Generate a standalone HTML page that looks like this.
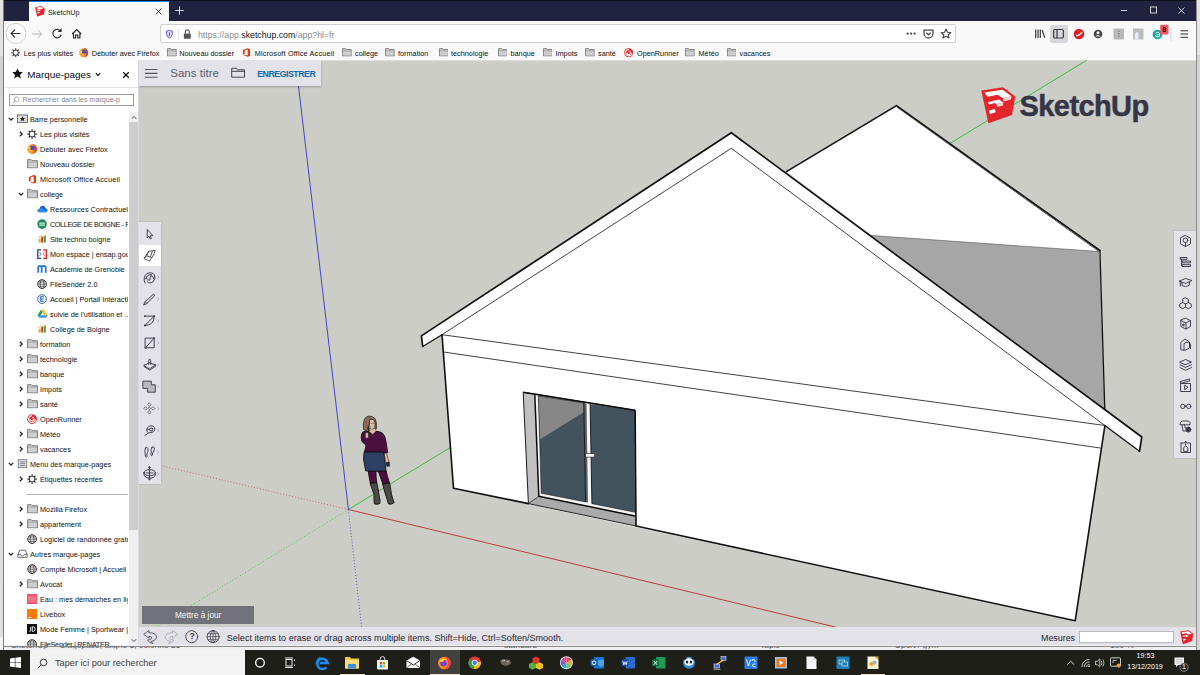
<!DOCTYPE html>
<html lang="fr">
<head>
<meta charset="utf-8">
<title>SketchUp</title>
<style>
*{box-sizing:border-box;margin:0;padding:0}
html,body{width:1200px;height:675px;overflow:hidden;background:#cccdc7;font-family:"Liberation Sans",sans-serif;}
body{position:relative}
.abs{position:absolute}
.t{position:absolute;white-space:nowrap;line-height:1;color:#111}
#titlebar{left:4px;top:0;width:1192px;height:21px;background:#202240;border-top:1px solid #0f101f}
#tab{left:28.700px;top:0.800px;width:140.200px;height:20.200px;background:#f9f9fa;border-top:1.300px solid #0a84ff}
#navbar{left:4px;top:21px;width:1192px;height:25px;background:#f9f9fa}
#bmbar{left:4px;top:46px;width:1192px;height:14px;background:#f9f9fa}
#urlbar{left:160px;top:24px;width:796px;height:19px;background:#fff;border:1px solid #cfcfd3;border-radius:2px}
#sidebar{left:4px;top:60px;width:134px;height:585px;background:#fff;overflow:hidden}
#splitter{left:138px;top:60px;width:1px;height:585px;background:#d9d9dc}
#scene{left:0;top:0;width:1200px;height:675px}
#suhead{left:139px;top:60px;width:182px;height:26px;background:#e3e2e9;box-shadow:0 1px 2px rgba(0,0,0,.25)}
#ltool{left:139px;top:222px;width:22px;height:262px;background:#e3e2e9;box-shadow:0 0 2px rgba(0,0,0,.2)}
#rtool{left:1174px;top:231px;width:22px;height:227px;background:#e3e2e9;box-shadow:0 0 2px rgba(0,0,0,.2)}
#status{left:139px;top:627.200px;width:1057px;height:18.300px;background:#e3e2e9}
#under{left:0;top:645px;width:1200px;height:5px;background:#f0f0f0}
#taskbar{left:0;top:650px;width:1200px;height:25px;background:#1f1f19}
#tsearch{left:30px;top:650px;width:215px;height:25px;background:#f3f3f3}
#leftstrip{left:0;top:0;width:4px;height:650px;background:linear-gradient(#e2e2e2 0,#e2e2e2 56px,#d0d0d0 56px,#d8d8d8 300px,#e0e0e0 637px,#f4f4f4 637px);border-right:1px solid #7c7c7c}
#rightstrip{left:1196px;top:0;width:4px;height:650px;background:linear-gradient(#e6e6e6 0,#e6e6e6 55px,#d4d4d2 55px);border-left:1px solid #8a8a8a}
</style>
</head>
<body>
<svg id="scene" class="abs" viewBox="0 0 1200 675">
<!--SCENE-->
<rect x="0" y="0" width="1200" height="675" fill="#cccdc7"/>
<rect x="139" y="60" width="1057" height="1.2" fill="#dddddb"/>
<!-- axes behind -->
<g fill="none" stroke-width="1">
<line x1="348.4" y1="509.5" x2="1087.1" y2="60" stroke="#38c038"/>
<line x1="348.4" y1="509.5" x2="845" y2="629.4" stroke="#c03c3c"/>
<line x1="348.4" y1="509.5" x2="295.4" y2="60" stroke="#4444cc"/>
<line x1="348.4" y1="509.5" x2="139" y2="460.5" stroke="#cc4a4a" stroke-opacity="0.8" stroke-dasharray="1 2"/>
<line x1="348.4" y1="509.5" x2="139" y2="637.5" stroke="#3fbf3f" stroke-opacity="0.85" stroke-dasharray="1 2"/>
<line x1="348.4" y1="509.5" x2="361.6" y2="627.5" stroke="#4848d0" stroke-opacity="0.85" stroke-dasharray="1 2"/>
</g>
<!-- back building -->
<polygon points="786.4,171.6 896.5,105.6 1099.9,250.5 1104.8,410 " fill="#fff"/>
<polygon points="871.6,235.5 1099.5,251.5 1104.6,410" fill="#a6a6a6"/>
<g fill="none" stroke="#111" stroke-linejoin="round" stroke-linecap="round">
<polyline points="786.4,171.6 896.5,105.6 1099.9,250.5" stroke-width="1.6"/>
<line x1="897.5" y1="107.5" x2="1098.5" y2="251.2" stroke-width="0.7"/>
<line x1="1099.9" y1="250.5" x2="1104.8" y2="410" stroke-width="1.3"/>
<line x1="871.6" y1="235.5" x2="1098.5" y2="251.5" stroke-width="0.6" stroke="#555"/>
</g>
<!-- front gable -->
<polygon points="421.4,335.9 731.3,132.7 1141.8,437 1139.5,451.3 1104.9,425.5 1075.2,620.8 453.5,488.2 442,334.7 422.7,346.5" fill="#fff"/>
<g fill="none" stroke="#111" stroke-linejoin="round" stroke-linecap="round">
<polyline points="422.7,346.5 421.4,335.9 731.3,132.7 1141.8,437 1139.5,451.3" stroke-width="1.7"/>
<line x1="422.7" y1="346.5" x2="442" y2="334.7" stroke-width="1.3"/>
<line x1="1139.5" y1="451.3" x2="1105.5" y2="426" stroke-width="1.3"/>
<polyline points="442,334.7 731.3,148.3 1104.9,425.5" stroke-width="0.8"/>
<polyline points="442,334.7 453.5,488.2 528.4,503.6" stroke-width="1.6"/><polyline points="636,526 1075.2,620.8 1104.9,425.5" stroke-width="1.6"/>
<line x1="442" y1="334.7" x2="1104.9" y2="425.5" stroke-width="0.8"/>
<line x1="443.5" y1="352" x2="1101.4" y2="448.2" stroke-width="0.8"/>
</g>
<!-- door -->
<polygon points="523.2,392.3 635,410.3 636,526 528.4,503.6" fill="#aaaaaa"/>
<polygon points="523.2,392.3 534.6,394.300 538.600,496.300 528.400,503.600" fill="#c0c0c0"/>
<polygon points="534.600,394.300 635,410.300 635,515.600 538.600,496.300" fill="#f6f6f6"/>
<polygon points="538.300,395.900 583.800,403 585.600,502 541.200,493.300" fill="#43535d"/>
<polygon points="538.300,395.900 583.800,403 584,412 540.200,439.300" fill="#878787"/>
<polygon points="583.800,403 586.500,403.400 588,502.500 585.600,502" fill="#606060"/>
<polygon points="590.200,404 635,410.300 635,512.300 592,503.700" fill="#43535d"/>
<g fill="none" stroke="#0c0c0c" stroke-linejoin="round">
<polygon points="523.2,392.3 635,410.3 636,526 528.4,503.6" stroke-width="0.900"/>
<line x1="523.200" y1="392.300" x2="635" y2="410.300" stroke-width="1.500"/>
<line x1="635.300" y1="410.300" x2="636" y2="526" stroke-width="1.300"/>
<polyline points="534.800,394.300 538.800,496.300 635,515.900" stroke-width="1.500"/>
<line x1="538.800" y1="496.300" x2="528.400" y2="503.600" stroke-width="0.600"/>
<polyline points="583.800,403 538.300,395.900 541.200,493.300 585.600,502" stroke-width="0.500"/>
<line x1="583.800" y1="403" x2="585.600" y2="502" stroke-width="0.900"/>
<line x1="590.100" y1="404" x2="591.900" y2="503.700" stroke-width="0.900"/>
<line x1="635" y1="512.300" x2="592" y2="503.700" stroke-width="0.500"/>
</g>
<rect x="585.700" y="453.700" width="9" height="3.400" fill="#f4f4f4" stroke="#222" stroke-width="0.600"/>
<!-- person -->
<g id="person" stroke="#101010" stroke-width="0.9" stroke-linejoin="round">
<path d="M370.100,482.900 L376.800,482.500 Q378.500,490 379.200,496 Q380.400,500.500 379.900,503.400 Q377,505 374.300,503.800 Q373.700,499 374.100,494.500 Q371.500,488 370.100,482.900 Z" fill="#4a4a4a"/>
<path d="M382.600,483.800 L389.700,482.900 Q390.800,490 391.500,494.500 Q393,500 394.100,502.600 Q392,504.800 388.500,504 Q387,499 386.100,496.300 Q384,490 382.600,483.800 Z" fill="#4a4a4a"/>
<path d="M368.300,470.900 L375.900,470.900 Q376,477 376.700,482.700 L370.300,483.100 Q369,477 368.300,470.900 Z" fill="#4c0f40"/>
<path d="M378.100,470.900 L386.100,470.900 Q387.500,477 389.500,483 L382.800,484 Q380.500,477 378.100,470.900 Z" fill="#4c0f40"/>
<path d="M364.300,451.800 H383.500 Q384.800,456 384.800,460 L386.100,470.900 Q376,471.800 365.700,470.900 Q364.500,465 363.600,459 Q363.500,455 364.300,451.800 Z" fill="#2c4163"/>
<path d="M386.600,452.700 L384.200,452.900 Q384.600,457 385.300,459.500 Q385,462 386.300,463.500 L388.800,463 Q389.600,460.500 388,458.700 Q387.300,455.500 386.600,452.700 Z" fill="#d9b9a2" stroke-width="0.5"/>
<path d="M386.200,462.500 L389.300,462 Q390,464.500 389.500,466.300 L387,466.600 Q386,464.500 386.200,462.500 Z" fill="#2a2a2a" stroke-width="0.4"/>
<path d="M363.100,431.800 Q366,430.800 369,431.500 L372.600,434.600 L376,431.300 Q380,431.500 382.300,433 Q384.800,435.500 385.500,439 L387.700,452.500 L384,453 L383.500,451.900 H364.500 Q365.600,448 366,445 L364,443.400 Q361.200,442 361.200,438 Q361,433.500 363.100,431.800 Z" fill="#4c0f40"/>
<path d="M369.800,428 L375.200,428.300 L376,431.300 L372.600,434.600 L369,431.500 Z" fill="#d9b9a2" stroke-width="0.4"/>
<path d="M369.400,419.500 Q372.500,417.500 374.800,420 Q375.600,424 374.800,427.500 Q373,430 370.500,429 Q369,426 369.400,419.500 Z" fill="#dcbda7" stroke-width="0.4"/>
<path d="M368.400,416 Q372.500,415.500 375.200,418.800 Q377.300,423 376.500,428.700 L375.200,428.300 Q375.700,423 374.200,420.200 Q372,418.800 369.800,419.300 Q369.300,424 368.800,427 L366.500,431 L363.600,429.600 Q362.600,423 364.500,419 Q366,416.500 368.400,416 Z" fill="#8a6b55" stroke-width="0.6"/>
<path d="M367.300,426.300 L369,426 L369.500,431 L367.800,431.500 Z" fill="#2a2a2a" stroke="none"/>
<path d="M365.400,433.400 Q366.500,432 368.300,433 L368.600,437.500 Q367,439 365.300,437.800 Z" fill="#d9b9a2" stroke-width="0.4"/>
<path d="M370.500,423.300 H374.800" stroke="#3a3030" stroke-width="0.400" fill="none"/>
</g>
</svg>
<div id="suhead" class="abs"></div>
<div id="ltool" class="abs"></div>
<div id="rtool" class="abs"></div>
<div id="status" class="abs"></div>
<div id="titlebar" class="abs"></div>
<div id="tab" class="abs"></div>
<div id="navbar" class="abs"></div>
<div id="bmbar" class="abs"></div>
<div id="urlbar" class="abs"></div>
<div id="sidebar" class="abs"></div>
<div id="splitter" class="abs"></div>
<div id="under" class="abs"></div>
<div id="taskbar" class="abs"></div>
<div id="tsearch" class="abs"></div>
<div id="leftstrip" class="abs"></div>
<div id="rightstrip" class="abs"></div>
<!--OVERLAY-->
<svg width="0" height="0" style="position:absolute"><defs>
<symbol id="folder" viewBox="0 0 10 9" preserveAspectRatio="none"><path d="M0.5,0.6 H3.8 L4.6,1.6 H9.5 V8.5 H0.5 Z" fill="#cfcfcf" stroke="#6e6e6e" stroke-width="0.8" stroke-linejoin="round"/><path d="M0.6,2.9 H9.4" stroke="#8a8a8a" stroke-width="0.6"/></symbol>
<symbol id="gear" viewBox="0 0 10 10"><g stroke="#333" stroke-width="1.200"><path d="M5,0.300V9.700M0.300,5H9.700M1.700,1.700L8.300,8.300M8.300,1.700L1.700,8.300"/></g><circle cx="5" cy="5" r="3.100" fill="#333"/><circle cx="5" cy="5" r="2.250" fill="#fff"/></symbol>
<symbol id="firefox" viewBox="0 0 10 10"><circle cx="5" cy="5" r="4.800" fill="#ff9a1f"/><path d="M5,0.200A4.800,4.800 0 0 1 9.800,5A4.800,4.800 0 0 1 5,9.800C8.500,8.500 8.500,2.500 5,0.200Z" fill="#e5352b"/><circle cx="4.800" cy="4.300" r="2.700" fill="#4b46c8"/><path d="M1,3.500 Q3,4 3.500,5.500 Q5,6.500 6.500,5.500 Q6,8 3.500,7.500 Q1,6.500 1,3.500Z" fill="#ffb52e"/><path d="M0.600,3.600Q2.500,1.800 4,3.400Q2.800,3.600 3,5Q1.500,4.800 0.600,3.600Z" fill="#ffdf4f"/></symbol>
<symbol id="office" viewBox="0 0 10 10"><path d="M1,2.4 L6.3,0.3 L9,1.1 V8.9 L6.3,9.7 L1,7.7 L6.3,8.3 V1.9 L3,2.8 V6.7 L1,7.7 Z" fill="#dc3e15"/></symbol>
<symbol id="globe" viewBox="0 0 10 10"><g fill="none" stroke="#333" stroke-width="0.950"><circle cx="5" cy="5" r="4.300"/><ellipse cx="5" cy="5" rx="1.900" ry="4.300" stroke-width="0.700"/><path d="M0.700,5H9.300M1.300,2.900H8.700M1.300,7.100H8.700" stroke-width="0.700"/></g></symbol>
<symbol id="twc" viewBox="0 0 6 6"><path d="M1.800,0.800 L4.200,3 L1.800,5.200" fill="none" stroke="#222" stroke-width="1.250"/></symbol>
<symbol id="two" viewBox="0 0 6 6"><path d="M0.800,1.800 L3,4.200 L5.200,1.800" fill="none" stroke="#222" stroke-width="1.250"/></symbol>
<symbol id="starbox" viewBox="0 0 11 9"><rect x="0.500" y="0.700" width="10" height="7.600" fill="#dedede" stroke="#555" stroke-width="0.800"/><path d="M5.500,1.900 L6.300,3.800 L8.300,3.900 L6.800,5.100 L7.300,7.100 L5.500,6 L3.700,7.100 L4.200,5.100 L2.700,3.900 L4.700,3.800 Z" fill="#222"/></symbol>
<symbol id="menuic" viewBox="0 0 11 10"><rect x="1" y="0.8" width="9" height="8.4" fill="#f4f4f4" stroke="#555" stroke-width="0.8"/><path d="M2.5,3H8.5M2.5,5H8.5M2.5,7H8.5" stroke="#444" stroke-width="0.8"/></symbol>
<symbol id="tray" viewBox="0 0 11 10"><path d="M0.6,5.8 L2.6,1.2 H8.4 L10.4,5.8 V8.8 H0.6 Z M0.6,5.8 H3.5 Q3.8,7.3 5.5,7.3 Q7.2,7.3 7.5,5.8 H10.4" fill="#f6f6f6" stroke="#444" stroke-width="0.8"/></symbol>
<symbol id="cloud" viewBox="0 0 11 8"><path d="M2.5,7.5 Q0.3,7.3 0.5,5.5 Q0.8,4 2.4,4 Q3,1.2 5.6,1 Q8,1 8.6,3.4 Q10.7,3.6 10.6,5.6 Q10.5,7.4 8.6,7.5 Z" fill="#1b5fc4"/><path d="M2.4,4 Q4,3 6,4.5 L10.4,6.8 Q9.8,7.5 8.6,7.5 H2.5 Q0.3,7.3 0.5,5.5 Q0.8,4 2.4,4Z" fill="#2f8fe8"/></symbol>
<symbol id="gcirc" viewBox="0 0 10 10"><circle cx="5" cy="5" r="4.7" fill="#1f8a5b"/><path d="M2.2,4H7.8M2.2,6H7.8" stroke="#d6f2e4" stroke-width="1.1"/></symbol>
<symbol id="gsite" viewBox="0 0 11 10"><rect x="1.500" y="5" width="2" height="4" fill="#e9a21c"/><rect x="4" y="3.200" width="2.200" height="5.800" fill="#d8412f"/><rect x="6.800" y="2" width="2.200" height="7" fill="#3aa64c"/><path d="M1.200,3.800 L4,2 L6.500,3 L9.500,0.800" stroke="#e0b020" stroke-width="0.900" fill="none"/></symbol>
<symbol id="ensap" viewBox="0 0 10 10"><rect x="0.8" y="0.8" width="8.400" height="8.400" fill="#fff"/><path d="M4,0.800 H0.800 V9.200 H4" fill="none" stroke="#2a3f8f" stroke-width="1.300"/><path d="M6,0.800 H9.200 V9.200 H6" fill="none" stroke="#d8262c" stroke-width="1.300"/><path d="M2.500,3 Q5,4.500 2.500,7" stroke="#2a3f8f" stroke-width="0.700" fill="none"/><path d="M7.500,3 Q5,4.500 7.500,7" stroke="#d8262c" stroke-width="0.700" fill="none"/></symbol>
<symbol id="acad" viewBox="0 0 10 10"><path d="M1.2,8.5 V3.6 Q1.2,1.9 2.8,1.9 Q4.6,1.9 4.6,3.8 V8.5 M4.6,3.8 Q4.6,1.9 6.4,1.9 Q8.6,1.9 8.6,3.8 V8.5" fill="none" stroke="#1d73d8" stroke-width="1.7"/></symbol>
<symbol id="ecirc" viewBox="0 0 10 10"><circle cx="5" cy="5" r="4.3" fill="#eaf1fb" stroke="#2f62b8" stroke-width="0.9"/><path d="M6.6,2.8H3.7V7.2H6.6M3.7,5H6.2" fill="none" stroke="#2f62b8" stroke-width="1"/></symbol>
<symbol id="gdrive" viewBox="0 0 11 10"><path d="M3.8,0.8 H7.2 L10.8,6.6 H7.4 Z" fill="#f6c431"/><path d="M3.8,0.8 L5.5,3.6 L2,9.3 L0.3,6.5 Z" fill="#1ea362"/><path d="M3.7,6.6 H10.8 L9.1,9.3 H2 Z" fill="#4688f4"/></symbol>
<symbol id="openr" viewBox="0 0 10 10"><circle cx="5" cy="5" r="4.8" fill="#e0262d"/><path d="M5,1.6 A3.4,3.4 0 1 0 8.4,5 M5,3.2 A1.8,1.8 0 1 1 3.2,5" fill="none" stroke="#fff" stroke-width="1.1"/></symbol>
<symbol id="eau" viewBox="0 0 10 10"><rect x="0" y="0" width="10" height="10" fill="#f0506e"/><path d="M1,3H9M1,5H9M1,7H9" stroke="#f9a8b8" stroke-width="0.8"/></symbol>
<symbol id="livebox" viewBox="0 0 10 10"><rect x="0" y="0" width="10" height="10" fill="#ff7900"/><path d="M1.2,8.4H5" stroke="#fff" stroke-width="0.7"/></symbol>
<symbol id="jd" viewBox="0 0 10 10"><rect x="0" y="0" width="10" height="10" fill="#111"/><path d="M3.6,2.8V6.4Q3.6,7.4 2.4,7.2M5.2,2.8V7.2H6.2Q8,7.2 8,5Q8,2.8 6.2,2.8Z" fill="none" stroke="#fff" stroke-width="0.9"/></symbol>
</defs></svg>
<svg class="abs" style="left:34.5px;top:6px" width="10" height="10.5" viewBox="0 0 34 37"><path d="M0,4 L22,0 L34,10 L31,30 L7,37 Z" fill="#e1262d"/><path d="M4,6 L21,3 L29,9 L11,12 Z M6,14 L18,12 L19,16 L8,18 Z M8,22 L15,20.5 L15.5,24.5 L9,26 Z" fill="#fff"/></svg>
<div class="t" style="left:48.0px;top:8.53px;font-size:7.25px;color:#222;font-weight:400;">SketchUp</div>
<svg class="abs" style="left:154.5px;top:8px" width="7" height="7" viewBox="0 0 7 7"><path d="M0.6,0.6L6.4,6.4M6.4,0.6L0.6,6.4" stroke="#333" stroke-width="0.9"/></svg>
<svg class="abs" style="left:175px;top:5.800px" width="9" height="9" viewBox="0 0 9 9"><path d="M4.5,0.3V8.7M0.3,4.5H8.7" stroke="#eee" stroke-width="0.9"/></svg>
<svg class="abs" style="left:1110px;top:0" width="86" height="21" viewBox="0 0 86 21"><path d="M11,10.5H17" stroke="#fff" stroke-width="0.8"/><rect x="40.5" y="7" width="6" height="6" fill="none" stroke="#fff" stroke-width="0.8"/><path d="M68.5,7.5L74.5,13.5M74.5,7.5L68.5,13.5" stroke="#fff" stroke-width="0.8"/></svg>
<svg class="abs" style="left:4px;top:21px" width="90" height="25" viewBox="0 0 90 25"><circle cx="12" cy="12.5" r="10" fill="#fdfdfd" stroke="#bdbdc2" stroke-width="0.7"/><path d="M16.5,12.5H7.5M11,8.5L7.2,12.5L11,16.5" fill="none" stroke="#333" stroke-width="1.1"/><path d="M28,13H37.5M34,9.2L37.7,13L34,16.8" fill="none" stroke="#b4b4b8" stroke-width="1"/><path d="M56.7,10.4A4.2,4.2 0 1 0 57.2,13.6" fill="none" stroke="#333" stroke-width="1.2"/><path d="M57.6,7V11H53.6Z" fill="#333"/><path d="M68.2,13L72.7,8.5L77.2,13M69.5,12V17H71.6V14H73.8V17H75.9V12" fill="none" stroke="#222" stroke-width="1.1"/></svg>
<svg class="abs" style="left:164px;top:27px" width="32" height="14" viewBox="0 0 32 14"><g transform="translate(5.400,7.100) scale(0.700) translate(-5.200,-6.800)"><path d="M5.200,1.200 Q7,2.400 9.200,2.400 V7 Q9.200,10.400 5.200,12.400 Q1.200,10.400 1.200,7 V2.400 Q3.400,2.400 5.200,1.200Z" fill="#eae6ff" stroke="#5b45d6" stroke-width="1.400"/><path d="M5.200,4.200V9.400" stroke="#5b45d6" stroke-width="1.500"/></g><path d="M14.300,1V13" stroke="#d4d4d8" stroke-width="0.700"/><rect x="19.800" y="6.500" width="7" height="5.200" rx="0.600" fill="#555"/><path d="M21.300,6.500V4.900A2,2 0 0 1 25.300,4.900V6.500" fill="none" stroke="#555" stroke-width="1.100"/></svg>
<div class="t" style="left:198px;top:31px;font-size:8.750px;color:#8a8a8f">https://app.<span style="color:#111">sketchup.com</span>/app?hl=fr</div>
<svg class="abs" style="left:900px;top:24px" width="56" height="19" viewBox="0 0 56 19"><g fill="#444"><circle cx="7.600" cy="9.600" r="1.150"/><circle cx="11.100" cy="9.600" r="1.150"/><circle cx="14.600" cy="9.600" r="1.150"/></g><path d="M24,6H33V9.500A4.500,4.500 0 0 1 24,9.500Z" fill="none" stroke="#444" stroke-width="1.250"/><path d="M26.3,8.600L28.500,10.800L30.700,8.600" fill="none" stroke="#444" stroke-width="1.250"/><path d="M46,5 L47.400,8.200 L50.800,8.500 L48.200,10.700 L49,14 L46,12.200 L43,14 L43.800,10.700 L41.200,8.500 L44.600,8.200 Z" fill="none" stroke="#444" stroke-width="1.150" stroke-linejoin="round"/></svg>
<div class="abs" style="left:1050px;top:25px;width:17.5px;height:17.5px;background:#d7d7db;border-radius:2px"></div>
<svg class="abs" style="left:1030px;top:21px" width="166" height="25" viewBox="0 0 166 25"><g stroke="#3a3a3f" stroke-width="1.200" fill="none"><path d="M5.700,8.500V17M8,8.500V17M10.300,8.500V17M12.200,9L14.700,16.800"/><rect x="23.700" y="8.500" width="9.600" height="8.500" rx="1"/><path d="M27,8.500V17"/></g><circle cx="49" cy="13" r="5.300" fill="#d8232a"/><path d="M46,14.500Q49,15.500 52,11" stroke="#fff" stroke-width="1.300" fill="none"/><circle cx="68" cy="13" r="4.300" fill="#444"/><circle cx="68" cy="11.700" r="1.500" fill="#f9f9fa"/><path d="M65.300,15.600Q68,13 70.700,15.600" fill="#f9f9fa"/><rect x="83.500" y="7.500" width="10.500" height="11" fill="#b9b9b9"/><path d="M88.800,9.500V16" stroke="#777" stroke-width="1" stroke-dasharray="1.500 1"/><rect x="103" y="7.500" width="10.500" height="11" fill="#bcbcbc"/><path d="M105,18.500V13Q106,10 108.500,12V18.500" fill="#e8eef5"/><circle cx="127.500" cy="13.500" r="4.800" fill="#1aa89a"/><path d="M129.500,15.500V12.800Q129.500,11.300 127.600,11.300Q126,11.300 125.700,12.300M129.500,13.600Q125.500,13.300 125.500,14.800Q125.500,16 127,16Q128.500,16 129.500,14.800" stroke="#fff" stroke-width="0.9" fill="none"/><rect x="130.200" y="3.800" width="8.300" height="9.700" rx="1" fill="#f4545c"/><path d="M141,7V20" stroke="#d0d0d4" stroke-width="0.700"/><path d="M150.500,9.800H158M150.500,13H158M150.500,16.200H158" stroke="#333" stroke-width="1.100"/></svg>
<div class="t" style="left:1162.3px;top:26.06px;font-size:7px;color:#111;font-weight:700;">8</div>
<svg class="abs" style="left:11.0px;top:48.2px;" width="9.4" height="9.4"><use href="#gear"/></svg>
<div class="t" style="left:23.7px;top:49.60px;font-size:7.3px;color:#111;font-weight:400;">Les plus visités</div>
<svg class="abs" style="left:79.3px;top:48.2px;" width="9.4" height="9.4"><use href="#firefox"/></svg>
<div class="t" style="left:91.7px;top:49.60px;font-size:7.3px;color:#111;font-weight:400;">Débuter avec Firefox</div>
<svg class="abs" style="left:167.1px;top:48.2px;" width="9.8" height="8.6"><use href="#folder"/></svg>
<div class="t" style="left:179.3px;top:49.60px;font-size:7.3px;color:#111;font-weight:400;">Nouveau dossier</div>
<svg class="abs" style="left:241.6px;top:47.0px;" width="9" height="10.8"><use href="#office"/></svg>
<div class="t" style="left:254.7px;top:49.60px;font-size:7.3px;color:#111;font-weight:400;letter-spacing:0.16px">Microsoft Office Accueil</div>
<svg class="abs" style="left:342.1px;top:48.2px;" width="9.8" height="8.6"><use href="#folder"/></svg>
<div class="t" style="left:355.0px;top:49.60px;font-size:7.3px;color:#111;font-weight:400;">college</div>
<svg class="abs" style="left:385.1px;top:48.2px;" width="9.8" height="8.6"><use href="#folder"/></svg>
<div class="t" style="left:398.0px;top:49.60px;font-size:7.3px;color:#111;font-weight:400;">formation</div>
<svg class="abs" style="left:438.6px;top:48.2px;" width="9.8" height="8.6"><use href="#folder"/></svg>
<div class="t" style="left:451.0px;top:49.60px;font-size:7.3px;color:#111;font-weight:400;">technologie</div>
<svg class="abs" style="left:497.6px;top:48.2px;" width="9.8" height="8.6"><use href="#folder"/></svg>
<div class="t" style="left:510.5px;top:49.60px;font-size:7.3px;color:#111;font-weight:400;">banque</div>
<svg class="abs" style="left:542.6px;top:48.2px;" width="9.8" height="8.6"><use href="#folder"/></svg>
<div class="t" style="left:555.5px;top:49.60px;font-size:7.3px;color:#111;font-weight:400;">Impots</div>
<svg class="abs" style="left:585.1px;top:48.2px;" width="9.8" height="8.6"><use href="#folder"/></svg>
<div class="t" style="left:598.0px;top:49.60px;font-size:7.3px;color:#111;font-weight:400;">santé</div>
<svg class="abs" style="left:623.8px;top:48.2px;" width="9.4" height="9.4"><use href="#openr"/></svg>
<div class="t" style="left:637.0px;top:49.60px;font-size:7.3px;color:#111;font-weight:400;">OpenRunner</div>
<svg class="abs" style="left:685.1px;top:48.2px;" width="9.8" height="8.6"><use href="#folder"/></svg>
<div class="t" style="left:698.5px;top:49.60px;font-size:7.3px;color:#111;font-weight:400;">Météo</div>
<svg class="abs" style="left:726.6px;top:48.2px;" width="9.8" height="8.6"><use href="#folder"/></svg>
<div class="t" style="left:739.5px;top:49.60px;font-size:7.3px;color:#111;font-weight:400;">vacances</div>
<div class="abs" style="left:4px;top:86.5px;width:134px;height:1px;background:#e3e3e6"></div>
<svg class="abs" style="left:11.5px;top:68px" width="11" height="11" viewBox="0 0 11 11"><path d="M5.500,0.400 L7.100,3.800 L10.800,4.200 L8,6.700 L8.800,10.400 L5.500,8.500 L2.200,10.400 L3,6.700 L0.200,4.200 L3.900,3.800 Z" fill="#111"/></svg>
<div class="t" style="left:27.2px;top:69.85px;font-size:9.9px;color:#0c0c0d;font-weight:400;">Marque-pages</div>
<svg class="abs" style="left:94.5px;top:72px" width="6" height="5" viewBox="0 0 6 5"><path d="M0.800,1.200L3,3.600L5.200,1.200" fill="none" stroke="#111" stroke-width="1.200"/></svg>
<svg class="abs" style="left:121.500px;top:70.500px" width="8" height="8" viewBox="0 0 8 8"><path d="M1.200,1.200L6.800,6.800M6.800,1.200L1.200,6.800" stroke="#111" stroke-width="1.300"/></svg>
<div class="abs" style="left:9px;top:93.500px;width:124.500px;height:12.500px;background:#fff;border:1px solid #9a9a9e"></div>
<svg class="abs" style="left:11.500px;top:96px" width="8" height="8" viewBox="0 0 8 8"><circle cx="4.600" cy="3.300" r="2.400" fill="none" stroke="#888" stroke-width="0.700"/><path d="M2.900,5.100L0.800,7.300" stroke="#888" stroke-width="0.700"/></svg>
<div class="t" style="left:22.5px;top:97.21px;font-size:7.1px;color:#85858a;font-weight:400;">Rechercher dans les marque-p</div>
<div class="abs" style="left:129px;top:112px;width:9.200px;height:533.500px;background:#f0f0f0"></div>
<div class="abs" style="left:129px;top:121.500px;width:9.200px;height:408.500px;background:#cdcdcd"></div>
<svg class="abs" style="left:130.600px;top:114.500px" width="6" height="5" viewBox="0 0 6 5"><path d="M0.800,3.800L3,1.400L5.200,3.800" fill="none" stroke="#444" stroke-width="0.900"/></svg>
<svg class="abs" style="left:130.600px;top:637.500px" width="6" height="5" viewBox="0 0 6 5"><path d="M0.800,1.200L3,3.600L5.200,1.200" fill="none" stroke="#444" stroke-width="0.900"/></svg>
<div class="abs" style="left:4px;top:112px;width:124px;height:533.500px;overflow:hidden">
<svg class="abs" style="left:4.0px;top:4.0px" width="6" height="6"><use href="#two"/></svg>
<svg class="abs" style="left:13.0px;top:2.3px" width="11" height="9.500"><use href="#starbox"/></svg>
<div class="t" style="left:26px;top:3.90px;font-size:7.3px;">Barre personnelle</div>
<svg class="abs" style="left:14.3px;top:19.0px" width="6" height="6"><use href="#twc"/></svg>
<svg class="abs" style="left:23.4px;top:17.0px" width="10.200" height="10.200"><use href="#gear"/></svg>
<div class="t" style="left:36px;top:18.90px;font-size:7.3px;">Les plus visités</div>
<svg class="abs" style="left:23.4px;top:32.0px" width="10.200" height="10.200"><use href="#firefox"/></svg>
<div class="t" style="left:36px;top:33.90px;font-size:7.3px;">Débuter avec Firefox</div>
<svg class="abs" style="left:23.0px;top:47.3px" width="11" height="9.500"><use href="#folder"/></svg>
<div class="t" style="left:36px;top:48.90px;font-size:7.3px;">Nouveau dossier</div>
<svg class="abs" style="left:23.9px;top:61.9px" width="9" height="10.600"><use href="#office"/></svg>
<div class="t" style="left:36px;top:63.90px;font-size:7.3px;letter-spacing:0.18px;">Microsoft Office Accueil</div>
<svg class="abs" style="left:14.3px;top:79.0px" width="6" height="6"><use href="#two"/></svg>
<svg class="abs" style="left:23.0px;top:77.3px" width="11" height="9.500"><use href="#folder"/></svg>
<div class="t" style="left:36px;top:78.90px;font-size:7.3px;">college</div>
<svg class="abs" style="left:33.0px;top:92.3px" width="11" height="9.500"><use href="#cloud"/></svg>
<div class="t" style="left:46px;top:93.90px;font-size:7.3px;">Ressources Contractuels</div>
<svg class="abs" style="left:33.4px;top:107.0px" width="10.200" height="10.200"><use href="#gcirc"/></svg>
<div class="t" style="left:46px;top:108.90px;font-size:7.3px;letter-spacing:-0.42px;">COLLEGE DE BOIGNE - Fr</div>
<svg class="abs" style="left:33.0px;top:122.3px" width="11" height="9.500"><use href="#gsite"/></svg>
<div class="t" style="left:46px;top:123.90px;font-size:7.3px;">Site techno boigne</div>
<svg class="abs" style="left:33.4px;top:137.0px" width="10.200" height="10.200"><use href="#ensap"/></svg>
<div class="t" style="left:46px;top:138.90px;font-size:7.3px;">Mon espace | ensap.gouv</div>
<svg class="abs" style="left:33.4px;top:152.0px" width="10.200" height="10.200"><use href="#acad"/></svg>
<div class="t" style="left:46px;top:153.90px;font-size:7.3px;">Académie de Grenoble</div>
<svg class="abs" style="left:33.4px;top:167.0px" width="10.200" height="10.200"><use href="#globe"/></svg>
<div class="t" style="left:46px;top:168.90px;font-size:7.3px;">FileSender 2.0</div>
<svg class="abs" style="left:33.4px;top:182.0px" width="10.200" height="10.200"><use href="#ecirc"/></svg>
<div class="t" style="left:46px;top:183.90px;font-size:7.3px;">Accueil | Portail Intéractif</div>
<svg class="abs" style="left:33.0px;top:197.3px" width="11" height="9.500"><use href="#gdrive"/></svg>
<div class="t" style="left:46px;top:198.90px;font-size:7.3px;">suivie de l'utilisation et ...</div>
<svg class="abs" style="left:33.0px;top:212.3px" width="11" height="9.500"><use href="#gsite"/></svg>
<div class="t" style="left:46px;top:213.90px;font-size:7.3px;">College de Boigne</div>
<svg class="abs" style="left:14.3px;top:229.0px" width="6" height="6"><use href="#twc"/></svg>
<svg class="abs" style="left:23.0px;top:227.3px" width="11" height="9.500"><use href="#folder"/></svg>
<div class="t" style="left:36px;top:228.90px;font-size:7.3px;">formation</div>
<svg class="abs" style="left:14.3px;top:244.0px" width="6" height="6"><use href="#twc"/></svg>
<svg class="abs" style="left:23.0px;top:242.3px" width="11" height="9.500"><use href="#folder"/></svg>
<div class="t" style="left:36px;top:243.90px;font-size:7.3px;">technologie</div>
<svg class="abs" style="left:14.3px;top:259.0px" width="6" height="6"><use href="#twc"/></svg>
<svg class="abs" style="left:23.0px;top:257.3px" width="11" height="9.500"><use href="#folder"/></svg>
<div class="t" style="left:36px;top:258.90px;font-size:7.3px;">banque</div>
<svg class="abs" style="left:14.3px;top:274.0px" width="6" height="6"><use href="#twc"/></svg>
<svg class="abs" style="left:23.0px;top:272.3px" width="11" height="9.500"><use href="#folder"/></svg>
<div class="t" style="left:36px;top:273.90px;font-size:7.3px;">Impots</div>
<svg class="abs" style="left:14.3px;top:289.0px" width="6" height="6"><use href="#twc"/></svg>
<svg class="abs" style="left:23.0px;top:287.3px" width="11" height="9.500"><use href="#folder"/></svg>
<div class="t" style="left:36px;top:288.90px;font-size:7.3px;">santé</div>
<svg class="abs" style="left:23.4px;top:302.0px" width="10.200" height="10.200"><use href="#openr"/></svg>
<div class="t" style="left:36px;top:303.90px;font-size:7.3px;">OpenRunner</div>
<svg class="abs" style="left:14.3px;top:319.0px" width="6" height="6"><use href="#twc"/></svg>
<svg class="abs" style="left:23.0px;top:317.3px" width="11" height="9.500"><use href="#folder"/></svg>
<div class="t" style="left:36px;top:318.90px;font-size:7.3px;">Météo</div>
<svg class="abs" style="left:14.3px;top:334.0px" width="6" height="6"><use href="#twc"/></svg>
<svg class="abs" style="left:23.0px;top:332.3px" width="11" height="9.500"><use href="#folder"/></svg>
<div class="t" style="left:36px;top:333.90px;font-size:7.3px;">vacances</div>
<svg class="abs" style="left:4.0px;top:349.0px" width="6" height="6"><use href="#two"/></svg>
<svg class="abs" style="left:13.0px;top:347.3px" width="11" height="9.500"><use href="#menuic"/></svg>
<div class="t" style="left:26px;top:348.90px;font-size:7.3px;">Menu des marque-pages</div>
<svg class="abs" style="left:14.3px;top:364.0px" width="6" height="6"><use href="#twc"/></svg>
<svg class="abs" style="left:23.4px;top:362.0px" width="10.200" height="10.200"><use href="#gear"/></svg>
<div class="t" style="left:36px;top:363.90px;font-size:7.3px;">Étiquettes récentes</div>
<svg class="abs" style="left:14.3px;top:394.0px" width="6" height="6"><use href="#twc"/></svg>
<svg class="abs" style="left:23.0px;top:392.3px" width="11" height="9.500"><use href="#folder"/></svg>
<div class="t" style="left:36px;top:393.90px;font-size:7.3px;">Mozilla Firefox</div>
<svg class="abs" style="left:14.3px;top:409.0px" width="6" height="6"><use href="#twc"/></svg>
<svg class="abs" style="left:23.0px;top:407.3px" width="11" height="9.500"><use href="#folder"/></svg>
<div class="t" style="left:36px;top:408.90px;font-size:7.3px;">appartement</div>
<svg class="abs" style="left:23.4px;top:422.0px" width="10.200" height="10.200"><use href="#globe"/></svg>
<div class="t" style="left:36px;top:423.90px;font-size:7.3px;">Logiciel de randonnée gratuit</div>
<svg class="abs" style="left:4.0px;top:439.0px" width="6" height="6"><use href="#two"/></svg>
<svg class="abs" style="left:13.0px;top:437.3px" width="11" height="9.500"><use href="#tray"/></svg>
<div class="t" style="left:26px;top:438.90px;font-size:7.3px;">Autres marque-pages</div>
<svg class="abs" style="left:23.4px;top:452.0px" width="10.200" height="10.200"><use href="#globe"/></svg>
<div class="t" style="left:36px;top:453.90px;font-size:7.3px;">Compte Microsoft | Accueil</div>
<svg class="abs" style="left:14.3px;top:469.0px" width="6" height="6"><use href="#twc"/></svg>
<svg class="abs" style="left:23.0px;top:467.3px" width="11" height="9.500"><use href="#folder"/></svg>
<div class="t" style="left:36px;top:468.90px;font-size:7.3px;">Avocat</div>
<svg class="abs" style="left:23.4px;top:482.0px" width="10.200" height="10.200"><use href="#eau"/></svg>
<div class="t" style="left:36px;top:483.90px;font-size:7.3px;">Eau : mes démarches en ligne</div>
<svg class="abs" style="left:23.4px;top:497.0px" width="10.200" height="10.200"><use href="#livebox"/></svg>
<div class="t" style="left:36px;top:498.90px;font-size:7.3px;">Livebox</div>
<svg class="abs" style="left:23.4px;top:512.0px" width="10.200" height="10.200"><use href="#jd"/></svg>
<div class="t" style="left:36px;top:513.90px;font-size:7.3px;">Mode Femme | Sportwear | JD</div>
<svg class="abs" style="left:23.4px;top:527.0px" width="10.200" height="10.200"><use href="#globe"/></svg>
<div class="t" style="left:36px;top:528.90px;font-size:7.3px;letter-spacing:-0.3px;">FileSender | RENATER</div>
<div class="abs" style="left:22px;top:381.500px;width:102px;height:1px;background:#b5b5b5"></div>
</div>
<svg class="abs" style="left:139px;top:60px" width="182" height="26" viewBox="0 0 182 26"><path d="M6,9.500H18.500M6,13.400H18.500M6,17.300H18.500" stroke="#55555f" stroke-width="1.100"/><path d="M92.700,8.300H97.500L98.600,9.800H105.500V17.200H92.700Z M92.700,11.300H105.500" fill="none" stroke="#44444e" stroke-width="1" stroke-linejoin="round"/></svg>
<div class="t" style="left:170.3px;top:67.62px;font-size:11.5px;color:#5a5c70;font-weight:400;">Sans titre</div>
<div class="t" style="left:257.2px;top:69.62px;font-size:8.8px;color:#1069ad;font-weight:700;letter-spacing:-0.5px">ENREGISTRER</div>
<svg class="abs" style="left:980.500px;top:86.500px" width="34.500" height="36.500" viewBox="0 0 34.500 36.500"><path d="M0.300,3.500 L22,0.200 L34.200,9.500 L31,28 L7.300,36.300 Z" fill="#e2262c"/><path d="M3.500,5.500 L21.500,2.800 L30.500,9.200 L22,11.300 L16.500,7.800 L6.500,9.800 Z M6.700,15.200 L17.800,12.600 L22.300,15.500 L15.500,17.300 L13.800,16 L8.200,17.500 Z M8,23.600 L13.800,22 L14.600,25.300 L9,27 Z" fill="#fff"/><path d="M22,11.300 L30.500,9.200 L29.800,12.500 L22.600,14.400Z M15.500,17.300 L22.300,15.500 L22,18.400 L16,20Z" fill="#fbd5d6"/></svg>
<div class="t" style="left:1019.6px;top:92.12px;font-size:29px;color:#363545;font-weight:700;letter-spacing:-0.6px;-webkit-text-stroke:0.5px #363545">SketchUp</div>
<div class="abs" style="left:139px;top:244.700px;width:22px;height:21.300px;background:#fff"></div>
<svg class="abs" style="left:139px;top:222px" width="22" height="263" viewBox="139 222 22 263" fill="none" stroke="#3b3a4a" stroke-width="0.950" stroke-linejoin="round" stroke-linecap="round">
<path d="M147.200,229.900 V237.900 L149,236.300 L150.300,239 L151.300,238.500 L150.100,235.900 L152.500,235.600 Z"/>
<path d="M144.200,258.200 L148.600,251.400 L155.300,250.300 L153.600,255 L149.600,260.700 Z M148.600,251.400 L146.800,256 L144.200,258.200 M146.800,256 L151.800,257.500 M152.300,251.500 L150.500,256.500" stroke-width="0.850"/>
<path d="M145,283 Q142.500,277 147,273.500 Q152,271.500 154.500,275 Q156,279 153,282 Q149,284 147.500,282 M146,278.500 Q147,274.500 151.500,274.500 Q149.500,277.500 150,280 Q147.500,281 146,278.500 Z M151.500,276 Q154,276.500 154,279"/>
<path d="M143.800,304.700 L145.200,301.700 L153.200,294.400 Q154.600,294.200 154.700,295.700 L146.900,303.400 Z M145.200,301.700 L146.900,303.400"/>
<path d="M144.800,316.100 H154.200 Q154.200,325.500 144.800,325.500 M154.200,316.100 L144.800,325.500"/><g fill="#3b3a4a" stroke="none"><circle cx="144.800" cy="316.100" r="0.900"/><circle cx="154.200" cy="316.100" r="0.900"/><circle cx="144.800" cy="325.500" r="0.900"/></g>
<path d="M145.500,338.100 H154.200 V347.800 H145.500 Z M145.500,347.800 L154.200,338.100"/><g fill="#3b3a4a" stroke="none"><circle cx="145.500" cy="347.800" r="0.950"/><circle cx="154.200" cy="338.100" r="0.950"/></g>
<path d="M144.200,365.300 L149.500,362.800 L155.600,365 L149.700,368.700 Z M144.200,365.300 V366.600 L149.700,370.100 L155.600,366.300 V365 M148.700,364.500 V360.500 L149.700,358.900 L150.700,360.500 V364.500"/>
<path d="M143.300,381.200 H151.300 V384.800 H155.300 V392.200 H147.600 V388.400 H143.300 Z" fill="#b9b9be"/>
<path d="M149.500,403 L151,404.700 L149.500,406.400 L148,404.700 Z M149.500,410.700 L151,412.400 L149.500,414.100 L148,412.400 Z M145.700,406.900 L147.300,408.500 L145.700,410.100 L144.100,408.500 Z M153.300,406.900 L154.900,408.500 L153.300,410.100 L151.700,408.500 Z M149.500,407.200 L150.700,408.500 L149.500,409.800 L148.300,408.500 Z" stroke-width="0.650"/>
<path d="M144.800,435.500 L148,433.300 M147,429 Q148,425.500 152,425.800 Q155.500,427 154.500,430.500 Q152.500,433.500 148.500,432.800 Q146,432 147,429 Z M149,429.500 Q150,427.500 152.300,428 Q153.300,429.500 152,431 Q150,431.500 149,429.500Z"/>
<path d="M145.500,448 Q147,446 147.900,448.500 Q148.300,452 146.900,454 Q147.500,457 146.300,457.400 Q145,457 145.300,454 Q144,451 145.500,448 Z M152,447.300 Q153.800,445.800 154.400,448 Q154.300,451.500 152.700,453 Q152.800,455.800 151.500,455.900 Q150.400,455.400 151.200,452.800 Q150.500,449.500 152,447.300 Z"/>
<path d="M144,472.500 Q144.500,469.800 149.500,469.600 Q155,469.800 155.300,472.500 Q155,475.600 149.500,475.800 Q144.300,475.600 144,472.500 Z M144,472.500 V475 Q145,478 149.500,478.200 Q154.500,478 155.300,475 V472.500 M149.500,466.500 V480 M148.400,467.800 L149.500,466.500 L150.600,467.800 M148.400,478.800 L149.500,480 L150.600,478.800 M146,473 H153"/>
<g stroke="#9a9aa5" stroke-width="0.700"><path d="M157.600,275.9 L158.900,277.2 L157.600,278.5"/><path d="M157.600,297.7 L158.900,299.0 L157.600,300.3"/><path d="M157.600,319.7 L158.900,321.0 L157.600,322.3"/><path d="M157.600,341.7 L158.900,343.0 L157.600,344.3"/><path d="M157.600,363.7 L158.900,365.0 L157.600,366.3"/><path d="M157.600,385.2 L158.900,386.5 L157.600,387.8"/><path d="M157.600,407.2 L158.900,408.5 L157.600,409.8"/><path d="M157.600,429.2 L158.900,430.5 L157.600,431.8"/><path d="M157.600,450.7 L158.900,452.0 L157.600,453.3"/><path d="M157.600,472.7 L158.900,474.0 L157.600,475.3"/></g>
</svg>
<svg class="abs" style="left:1174px;top:231px" width="22" height="227" viewBox="1174 231 22 227" fill="none" stroke="#3b3a4a" stroke-width="0.950" stroke-linejoin="round" stroke-linecap="round">
<path d="M1185.500,235.500 L1190.500,238.200 V243.800 L1185.500,246.500 L1180.500,243.800 V238.200 Z"/><circle cx="1185.500" cy="240.300" r="2.300"/><path d="M1185.500,242.600 V246.500"/>
<path d="M1180.500,257.500 H1187 V259.300 H1180.500 Z M1182.500,261 H1190.500 V262.800 H1182.500 Z M1182.500,264.700 H1190.500 V266.500 H1182.500 Z M1181.500,259.300 V265.600 H1182.500 M1181.500,261.900 H1182.500"/>
<path d="M1179.500,281 L1185.500,278.500 L1192,280.500 L1186,283.300 Z M1182,282.300 V285.500 Q1185.500,287.800 1189.300,285.200 V282 M1180.300,281.500 V286"/>
<path d="M1185.500,297.800 L1188.300,299.300 V302.500 L1185.500,304 L1182.700,302.500 V299.300 Z M1182.700,302.500 L1179.800,304 V307.200 L1182.700,308.700 L1185.500,307.200 V304 M1188.300,302.500 L1191.200,304 V307.200 L1188.300,308.700 L1185.500,307.200"/>
<path d="M1185.500,318.300 L1190.500,320.500 V326.500 L1186,329 L1180.800,326.500 V320.500 Z M1180.800,320.500 L1186,323 L1190.500,320.500 M1186,323 V329"/><circle cx="1183.400" cy="325" r="1.200" fill="#3b3a4a" stroke="none"/>
<path d="M1180.800,349.500 V342.500 L1185,339 L1189.500,342 V348 L1185.500,350 Z M1184,350 V343.500 L1187,342 L1190.500,343.800 V348.500"/>
<path d="M1180,362 L1185.500,359.500 L1191.500,362 L1185.500,364.600 Z M1180,364.800 L1185.500,367.400 L1191.500,364.800 M1180,367.600 L1185.500,370.200 L1191.500,367.600"/>
<path d="M1181,383.500 H1190.500 V391.500 H1181 Z M1180.500,381.500 L1189.500,379 L1190,380.800 L1181,383.300 Z M1184.700,385.500 V389.700 L1187.700,387.600 Z"/>
<circle cx="1182.800" cy="406.400" r="2.200"/><circle cx="1188.700" cy="406.400" r="2.200"/><path d="M1185,406 Q1185.700,405.300 1186.500,406"/>
<path d="M1180.500,422.500 L1182,421 H1188.500 L1190,422.500 V424.800 H1180.500 Z M1182,424.800 L1183,431 H1185.500 M1184.500,424.800 L1185.200,428"/><circle cx="1188.300" cy="429.600" r="2.500" fill="#3b3a4a"/>
<path d="M1181,443 H1184 M1187.500,443 H1190.500 V452.500 H1181 V443 M1183.700,451 V447.500 L1185.700,446 L1187.800,447.500 V451 Z M1185.700,441.500 V445 M1184.700,442.500 L1185.700,441.500 L1186.700,442.500"/>
</svg>
<div class="abs" style="left:142px;top:605.600px;width:112.300px;height:18.400px;background:rgba(108,108,118,0.94)"></div>
<div class="t" style="left:175.0px;top:612.21px;font-size:8.25px;color:#f4f4f6;font-weight:400;">Mettre à jour</div>
<svg class="abs" style="left:139px;top:627px" width="100" height="18" viewBox="139 627 100 18" fill="none" stroke-linejoin="round" stroke-linecap="round">
<path d="M144,634 L149,630.500 V632.800 Q156.500,632.500 156.500,638 Q155,641 151,641.500 L153,643.500 Q149,643 147.500,640 Q151,640 152,638 Q151,636 149,636.200 V637.800 Z" stroke="#3d3c4c" stroke-width="0.800"/>
<path d="M177.500,634 L172.500,630.500 V632.800 Q165,632.500 165,638 Q166.500,641 170.500,641.500 L168.500,643.500 Q172.500,643 174,640 Q170.500,640 169.500,638 Q170.500,636 172.500,636.200 V637.800 Z" stroke="#a3a3ad" stroke-width="0.800"/>
<circle cx="191.700" cy="636.700" r="6" stroke="#3d3c4c" stroke-width="0.900"/>
<circle cx="213.100" cy="636.700" r="6" stroke="#3d3c4c" stroke-width="0.900"/><ellipse cx="213.100" cy="636.700" rx="2.700" ry="6" stroke="#3d3c4c" stroke-width="0.700"/><path d="M207.100,636.700 H219.100 M208,633.700 H218.200 M208,639.700 H218.200 M213.100,630.700 V642.700" stroke="#3d3c4c" stroke-width="0.700"/>
</svg>
<div class="t" style="left:189.4px;top:632.48px;font-size:8.5px;color:#3d3c4c;font-weight:700;">?</div>
<div class="t" style="left:226.8px;top:633.69px;font-size:9.05px;color:#26252f;font-weight:400;">Select items to erase or drag across multiple items. Shift=Hide, Ctrl=Soften/Smooth.</div>
<div class="t" style="left:1041.0px;top:633.57px;font-size:8.9px;color:#26252f;font-weight:400;">Mesures</div>
<div class="abs" style="left:1079px;top:631px;width:95px;height:11.500px;background:#fff;border:1px solid #b9b9c0"></div>
<svg class="abs" style="left:1180px;top:629.500px" width="13.500" height="14.500" viewBox="0 0 34.500 36.500"><path d="M0.300,3.500 L22,0.200 L34.200,9.500 L31,28 L7.300,36.300 Z" fill="#e2262c"/><path d="M3.500,5.500 L21.500,2.800 L30.500,9.200 L22,11.300 L16.500,7.800 L6.500,9.800 Z M6.700,15.200 L17.800,12.600 L22.300,15.500 L15.500,17.300 L13.800,16 L8.200,17.500 Z M8,23.600 L13.800,22 L14.600,25.300 L9,27 Z" fill="#fff"/></svg>
<div class="abs" style="left:4px;top:645.500px;width:1192px;height:1px;background:#8c8c8c"></div>
<div class="t" style="left:6px;top:640.800px;font-size:8.500px;color:#666;clip-path:inset(5.400px 0 0 0)">- SketchUp</div>
<div class="t" style="left:60px;top:640.800px;font-size:8.500px;color:#666;clip-path:inset(5.400px 0 0 0)">dragspace, aligné 1, colonne 25</div>
<div class="t" style="left:504px;top:640.800px;font-size:8.500px;color:#666;clip-path:inset(5.400px 0 0 0)">standard</div>
<div class="t" style="left:760px;top:640.800px;font-size:8.500px;color:#666;clip-path:inset(5.400px 0 0 0)">Tapis</div>
<div class="t" style="left:895px;top:640.800px;font-size:8.500px;color:#666;clip-path:inset(5.400px 0 0 0)">Sport / gym</div>
<div class="t" style="left:1110px;top:640.800px;font-size:8.500px;color:#666;clip-path:inset(5.400px 0 0 0)">100 %</div>
<svg class="abs" style="left:9.500px;top:657.400px" width="11" height="11" viewBox="0 0 11 11"><path d="M0,1.500 L4.800,0.800 V5.200 H0 Z M5.400,0.700 L11,0 V5.200 H5.400 Z M0,5.800 H4.800 V10.200 L0,9.500 Z M5.400,5.800 H11 V11 L5.400,10.300 Z" fill="#fff"/></svg>
<svg class="abs" style="left:36.500px;top:657.500px" width="11" height="11" viewBox="0 0 11 11"><circle cx="6.600" cy="4.400" r="3.300" fill="none" stroke="#333" stroke-width="1"/><path d="M4.200,6.800L0.800,10.200" stroke="#333" stroke-width="1"/></svg>
<div class="t" style="left:55.0px;top:658.72px;font-size:9.2px;color:#3c3c3c;font-weight:400;">Taper ici pour rechercher</div>
<div class="abs" style="left:429.500px;top:650px;width:30px;height:25px;background:#414140"></div>
<div class="abs" style="left:429.500px;top:674px;width:30px;height:1px;background:#e9e2b8"></div>
<div class="abs" style="left:340px;top:674px;width:25px;height:1px;background:#e9e2b8"></div>
<div class="abs" style="left:861px;top:674px;width:24px;height:1px;background:#e9e2b8"></div>
<svg class="abs" style="left:245px;top:650px" width="955" height="25" viewBox="245 650 955 25">
<circle cx="260" cy="662.700" r="4.300" fill="none" stroke="#fff" stroke-width="1.300"/>
<g stroke="#fff" stroke-width="0.900" fill="none"><rect x="286" y="659.500" width="6" height="6.500"/><path d="M285,658H293M285,667.500H293M294.500,659.500V661M294.500,664.500V666"/></g>
<path d="M326.500,667.200 A5.200,5.200 0 1 1 327.600,662.900 H320" stroke="#1b8cf0" stroke-width="2.500" fill="none"/><path d="M316.300,664.500 Q316.500,659.500 320.500,657.500" stroke="#1b8cf0" stroke-width="1.600" fill="none"/>
<path d="M345,657 H350 L351,658.500 H359 V668.500 H345 Z" fill="#f6c646"/><rect x="345" y="660" width="14" height="8.500" fill="#f9d978"/><rect x="348" y="664" width="8" height="4.500" fill="#3d8fdc"/>
<path d="M377,660 H388 V668.500 Q388,669.500 387,669.500 H378 Q377,669.500 377,668.500 Z" fill="#f4f4f4"/><path d="M380,660 Q380,656.500 382.500,656.500 Q385,656.500 385,660" fill="none" stroke="#f4f4f4" stroke-width="0.900"/><rect x="379.800" y="662" width="2.400" height="2.400" fill="#f25022"/><rect x="382.900" y="662" width="2.400" height="2.400" fill="#7fba00"/><rect x="379.800" y="665.100" width="2.400" height="2.400" fill="#00a4ef"/><rect x="382.900" y="665.100" width="2.400" height="2.400" fill="#ffb900"/>
<path d="M406.500,660.500 L413.300,656.800 L420,660.500 V668 H406.500 Z" fill="#fff"/><path d="M406.500,660.500 L413.300,665 L420,660.500" fill="none" stroke="#1f1f1b" stroke-width="0.900"/><path d="M406.500,668 L411.500,663.800 M420,668 L415,663.800" stroke="#1f1f1b" stroke-width="0.700"/>
<circle cx="444.300" cy="663" r="6.300" fill="#ff8a16"/><path d="M444.300,656.700 A6.300,6.300 0 0 1 444.300,669.300 Q450,666 447,659 Q446,657.500 444.300,656.700Z" fill="#ff3d47"/><circle cx="443.500" cy="663.300" r="3.200" fill="#7542e5"/><path d="M439.500,660.500 Q442,657.500 446,659.300 Q443.500,660 443,662 Q441,662.500 439.500,660.500Z" fill="#ffd43a"/>
<circle cx="474.700" cy="662.700" r="6.300" fill="#e33b2e"/><path d="M474.700,662.700 L469.300,659.500 A6.300,6.300 0 0 0 474,669 Z" fill="#2ba24c"/><path d="M474.700,662.700 L474,669 A6.300,6.300 0 0 0 480.900,661.500 Z" fill="#fbc116"/><circle cx="474.700" cy="662.700" r="2.900" fill="#fff"/><circle cx="474.700" cy="662.700" r="2.200" fill="#3f7fe8"/>
<path d="M500,660.500 L503,659 L510,660 L511,664 L506,666 L501.500,664.500 Z" fill="#6d6658"/><path d="M502,661 L505,660.500 M506.500,661.500 L509,662" stroke="#ddd" stroke-width="0.700"/>
<path d="M536,656.500 L539.500,658.300 V662.300 L536,664 L532.500,662.300 V658.300 Z" fill="#e0332f"/><path d="M532.500,662.300 L536,664 V668 L532.500,669.700 L529,668 V664 Z" fill="#53b23c"/><path d="M539.500,662.300 L543,664 V668 L539.500,669.700 L536,668 V664 Z" fill="#f1c21d"/>
<circle cx="566.400" cy="662.700" r="6.500" fill="#f3f3f3"/><path d="M566.400,662.700 L566.400,657 A5.700,5.700 0 0 1 571.300,659.800 Z" fill="#e84a3c"/><path d="M566.400,662.700 L571.300,659.800 A5.700,5.700 0 0 1 571.300,665.600 Z" fill="#f3a92c"/><path d="M566.400,662.700 L571.300,665.600 A5.700,5.700 0 0 1 566.400,668.400 Z" fill="#7cc043"/><path d="M566.400,662.700 L566.400,668.400 A5.700,5.700 0 0 1 561.500,665.600 Z" fill="#30a6d9"/><path d="M566.400,662.700 L561.500,665.600 A5.700,5.700 0 0 1 561.500,659.800 Z" fill="#7a58c7"/><path d="M566.400,662.700 L561.500,659.800 A5.700,5.700 0 0 1 566.400,657 Z" fill="#e0479e"/>
<rect x="594" y="657" width="10" height="11.500" rx="0.800" fill="#1b74cf"/><path d="M598,660 H604 V665 L601,667 L598,665Z" fill="#4aa5ee"/><rect x="590.500" y="659.300" width="7" height="7" rx="0.700" fill="#0f5bb1"/><circle cx="594" cy="662.800" r="1.900" fill="none" stroke="#fff" stroke-width="1"/>
<rect x="625.500" y="657" width="9.500" height="11.500" rx="0.800" fill="#2b6bd0"/><rect x="621.500" y="659.300" width="7" height="7" rx="0.700" fill="#1a4fa8"/><path d="M622.800,661 L623.800,664.800 L625,661.800 L626.200,664.800 L627.200,661" fill="none" stroke="#fff" stroke-width="0.800"/>
<rect x="656" y="657" width="9.500" height="11.500" rx="0.800" fill="#1f9a59"/><rect x="652" y="659.300" width="7" height="7" rx="0.700" fill="#13733f"/><path d="M653.800,661 L657.200,664.800 M657.200,661 L653.800,664.800" stroke="#fff" stroke-width="0.900"/>
<circle cx="689" cy="662.700" r="6" fill="#2f8fd8"/><ellipse cx="689" cy="662" rx="4.700" ry="3.800" fill="#f4f4f4"/><ellipse cx="687" cy="662" rx="1.200" ry="1.500" fill="#222"/><ellipse cx="691" cy="662" rx="1.200" ry="1.500" fill="#222"/><circle cx="685" cy="658.300" r="1.400" fill="#222"/><circle cx="693" cy="658.300" r="1.400" fill="#222"/>
<rect x="721" y="656.500" width="5" height="4" fill="#4a6fd8" stroke="#ddd" stroke-width="0.600"/><rect x="714" y="664" width="5.500" height="4" fill="#4a6fd8" stroke="#ddd" stroke-width="0.600"/><path d="M717,664 L723,660.500" stroke="#f0d23a" stroke-width="1.300"/><path d="M713.500,669.300 H720.500" stroke="#ccc" stroke-width="0.800"/>
<rect x="744.500" y="656.500" width="13" height="12.500" rx="1" fill="#2f7de1"/><path d="M746.500,659.500 L748.500,666 L750.500,659.500 M752,661 Q752,659.500 753.500,659.500 Q755,659.500 755,661 V662 M755.500,664 Q752.500,663.500 752.500,665.500 Q752.500,667.200 755.500,666.700" fill="none" stroke="#fff" stroke-width="0.900"/>
<rect x="775" y="657" width="12" height="11.500" fill="#9fc3dc"/><rect x="776.500" y="658.500" width="9" height="8.500" fill="#e97a1e"/><path d="M779.500,660.500 V665 L783.500,662.800 Z" fill="#fff"/>
<path d="M806.500,656.500 H813.500 L816.500,659.500 V669 H806.500 Z" fill="#f6f6f6"/><path d="M813.500,656.500 V659.500 H816.500" fill="#bbb"/>
<rect x="836.500" y="656.500" width="13" height="12.500" fill="#1b7eb5"/><rect x="839" y="660" width="5.500" height="4" fill="none" stroke="#cfe6f3" stroke-width="0.700"/><rect x="842" y="662" width="5.500" height="4" fill="#1b7eb5" stroke="#cfe6f3" stroke-width="0.700"/>
<path d="M867.500,656.500 H875 L878.500,660 V669 H867.500 Z" fill="#fbf3d0"/><path d="M875,656.500 L878.500,660 L878.500,656.500Z" fill="#e6b422"/><circle cx="871.500" cy="664" r="2" fill="#f0a030"/><circle cx="874.500" cy="662.500" r="2" fill="#7db6e8"/>
<path d="M1067.300,664.500 L1070.700,661.200 L1074.100,664.500" fill="none" stroke="#eee" stroke-width="0.900"/>
<g fill="none" stroke="#ddd" stroke-width="0.900"><path d="M1082,667 A7,7 0 0 1 1089.500,659.500 M1084.300,667 A4.800,4.800 0 0 1 1089.500,662 M1086.600,667 A2.500,2.500 0 0 1 1089.500,664.400"/></g><rect x="1088.300" y="665.500" width="1.500" height="1.500" fill="#ddd"/>
<path d="M1095.500,661.300 H1097.300 L1099.800,659 V667 L1097.300,664.700 H1095.500 Z" fill="none" stroke="#ddd" stroke-width="0.800"/><path d="M1101.300,660.800 Q1102.600,663 1101.300,665.200 M1103,659.500 Q1105,663 1103,666.500" fill="none" stroke="#ddd" stroke-width="0.700"/>
<rect x="1110.500" y="657.800" width="10" height="8.500" rx="0.800" fill="none" stroke="#ddd" stroke-width="0.900"/><path d="M1113,660.300 H1116.500 M1113,660.300 V663" stroke="#ddd" stroke-width="0.800"/><circle cx="1118.700" cy="665.600" r="2.100" fill="#f59a1b"/>
<path d="M1174.500,657.500 H1184 V665 H1178 L1176,667.300 V665 H1174.500 Z" fill="#f2f2f2"/><path d="M1176,659.500H1182.500M1176,661.300H1182.500M1176,663.100H1182.500" stroke="#999" stroke-width="0.500"/><circle cx="1184" cy="667.300" r="4.200" fill="#2b2b2b" stroke="#9a9a9a" stroke-width="0.700"/>
</svg>
<div class="t" style="left:1136.6px;top:653.21px;font-size:7.1px;color:#fff;font-weight:400;">19:53</div>
<div class="t" style="left:1127.3px;top:664.11px;font-size:7.1px;color:#fff;font-weight:400;">13/12/2019</div>
<div class="t" style="left:1182.1px;top:663.96px;font-size:6.8px;color:#fff;font-weight:400;">1</div>
</body>
</html>
